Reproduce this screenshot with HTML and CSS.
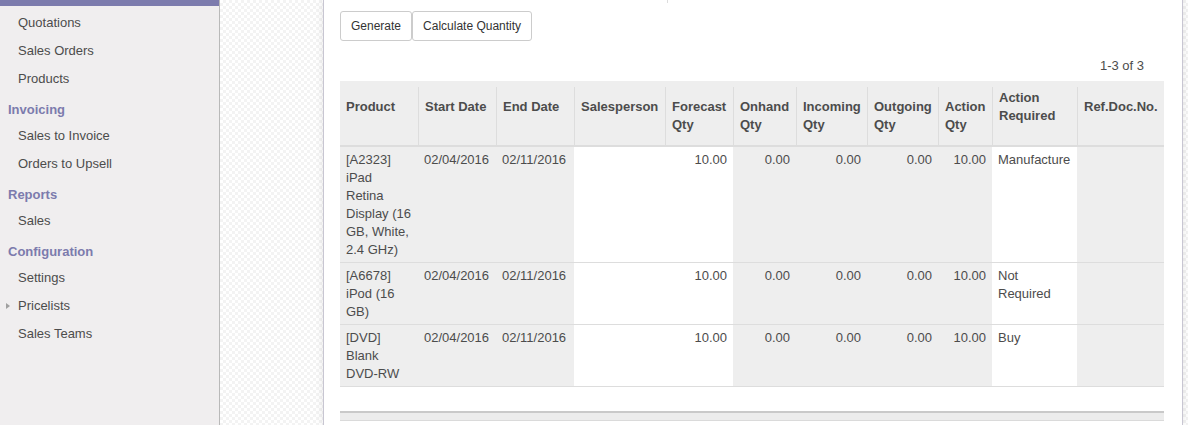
FILE: index.html
```html
<!DOCTYPE html>
<html lang="en">
<head>
<meta charset="utf-8">
<title>Sales</title>
<link rel="stylesheet" href="styles.css">
</head>
<body>
<div class="app">
  <aside class="sidebar">
    <div class="active-bar"></div>
    <ul class="menu">
      <li class="item">Quotations</li>
      <li class="item">Sales Orders</li>
      <li class="item">Products</li>
      <li class="section">Invoicing</li>
      <li class="item">Sales to Invoice</li>
      <li class="item">Orders to Upsell</li>
      <li class="section">Reports</li>
      <li class="item">Sales</li>
      <li class="section">Configuration</li>
      <li class="item">Settings</li>
      <li class="item has-caret"><span class="caret"></span>Pricelists</li>
      <li class="item">Sales Teams</li>
    </ul>
  </aside>
  <main class="main">
    <div class="sheet">
      <div class="top-tick"></div>
      <div class="buttons">
        <button class="btn">Generate</button><button class="btn">Calculate Quantity</button>
      </div>
      <div class="pager">1-3 of 3</div>
      <table class="grid">
        <colgroup>
          <col class="c-product"><col class="c-date"><col class="c-date"><col class="c-sales">
          <col class="c-forecast"><col class="c-onhand"><col class="c-incoming"><col class="c-outgoing">
          <col class="c-aqty"><col class="c-areq"><col class="c-ref">
        </colgroup>
        <thead>
          <tr>
            <th class="first">Product</th>
            <th>Start Date</th>
            <th>End Date</th>
            <th>Salesperson</th>
            <th>Forecast Qty</th>
            <th>Onhand Qty</th>
            <th>Incoming Qty</th>
            <th>Outgoing Qty</th>
            <th>Action Qty</th>
            <th class="high">Action Required</th>
            <th>Ref.Doc.No.</th>
          </tr>
        </thead>
        <tbody>
          <tr>
            <td>[A2323] iPad Retina Display (16 GB, White, 2.4 GHz)</td>
            <td>02/04/2016</td>
            <td>02/11/2016</td>
            <td class="white"></td>
            <td class="white num">10.00</td>
            <td class="num">0.00</td>
            <td class="num">0.00</td>
            <td class="num">0.00</td>
            <td class="num">10.00</td>
            <td class="white">Manufacture</td>
            <td></td>
          </tr>
          <tr>
            <td>[A6678] iPod (16 GB)</td>
            <td>02/04/2016</td>
            <td>02/11/2016</td>
            <td class="white"></td>
            <td class="white num">10.00</td>
            <td class="num">0.00</td>
            <td class="num">0.00</td>
            <td class="num">0.00</td>
            <td class="num">10.00</td>
            <td class="white">Not Required</td>
            <td></td>
          </tr>
          <tr>
            <td>[DVD] Blank DVD-RW</td>
            <td>02/04/2016</td>
            <td>02/11/2016</td>
            <td class="white"></td>
            <td class="white num">10.00</td>
            <td class="num">0.00</td>
            <td class="num">0.00</td>
            <td class="num">0.00</td>
            <td class="num">10.00</td>
            <td class="white">Buy</td>
            <td></td>
          </tr>
        </tbody>
      </table>
      <div class="next-band"></div>
    </div>
  </main>
</div>
</body>
</html>
```

FILE: styles.css
```css
html, body {
  margin: 0;
  padding: 0;
  height: 100%;
  overflow: hidden;
}

body {
  font-family: "Liberation Sans", Arial, sans-serif;
  font-size: 13px;
  color: #4c4c4c;
  background: #fff;
}

.app {
  display: flex;
  height: 100%;
}

/* Sidebar */
.sidebar {
  width: 219px;
  flex: 0 0 219px;
  background: #f0eeef;
  border-right: 1px solid #b9b9b9;
}

.active-bar {
  height: 6px;
  background: #7c7bad;
  margin-bottom: 3px;
}

.menu {
  list-style: none;
  margin: 0;
  padding: 0;
}

.item {
  padding: 5px 18px;
  line-height: 18px;
  display: flex;
  align-items: center;
}

.item.has-caret {
  padding-left: 6px;
}

.caret {
  width: 0;
  height: 0;
  border-left: 4px solid #a0a0a0;
  border-top: 3.5px solid transparent;
  border-bottom: 3.5px solid transparent;
  margin-right: 8px;
}

.section {
  padding: 8px 8px 3px;
  line-height: 18px;
  font-weight: bold;
  color: #7c7bad;
}

/* Main */
.main {
  flex: 1;
  background-color: #fff;
  background-image: repeating-conic-gradient(#f3f3f3 0% 25%, #ffffff 0% 50%);
  background-size: 6px 6px;
  overflow: hidden;
}

.sheet {
  box-sizing: border-box;
  width: 860px;
  min-height: 100%;
  margin-left: 103px;
  background: #fff;
  border-left: 1px solid #c8c6d2;
  border-right: 1px solid #c8c6d2;
  box-shadow: 0 0 8px rgba(0, 0, 0, 0.10);
  padding: 0 18px 0 16px;
}

.top-tick {
  width: 1px;
  height: 3px;
  margin-left: 327px;
  background: #dddddd;
}

.buttons {
  display: flex;
  margin-top: 8px;
}

.btn {
  font-family: "Liberation Sans", Arial, sans-serif;
  font-size: 12px;
  line-height: 18px;
  color: #333;
  background: #fff;
  border: 1px solid #cccccc;
  border-radius: 3px;
  padding: 5px 10px;
  margin: 0;
}

.pager {
  margin-top: 16px;
  line-height: 18px;
  text-align: right;
  padding-right: 20px;
  color: #4c4c4c;
}

/* Table */
.grid {
  margin-top: 6px;
  width: 824px;
  table-layout: fixed;
  border-collapse: separate;
  border-spacing: 0;
}

.c-product { width: 78px; }
.c-date { width: 78px; }
.c-sales { width: 91px; }
.c-forecast { width: 68px; }
.c-onhand { width: 63px; }
.c-incoming { width: 71px; }
.c-outgoing { width: 71px; }
.c-aqty { width: 54px; }
.c-areq { width: 85px; }
.c-ref { width: 87px; }

.grid th {
  text-align: left;
  vertical-align: top;
  font-weight: bold;
  line-height: 18px;
  padding: 17px 5px 11px 7px;
  background-color: #eeeeee;
  background-image: linear-gradient(#dddddd, #dddddd);
  background-repeat: no-repeat;
  background-position: left bottom;
  background-size: 1px calc(100% - 6px);
  border-bottom: 2px solid #dddddd;
}

.grid th.first {
  background-image: none;
  padding-left: 6px;
  padding-right: 6px;
}

.grid th.high {
  padding-top: 8px;
}

.grid td {
  vertical-align: top;
  line-height: 18px;
  padding: 4px 6px 3px;
  background: #eeeeee;
  border-bottom: 1px solid #dddddd;
}

.grid td.white {
  background: #ffffff;
}

.grid td.num {
  text-align: right;
}

.next-band {
  margin-top: 24px;
  height: 7px;
  background: #ececec;
  border-top: 2px solid #c9c9c9;
  border-bottom: 1px solid #dadada;
}
```
